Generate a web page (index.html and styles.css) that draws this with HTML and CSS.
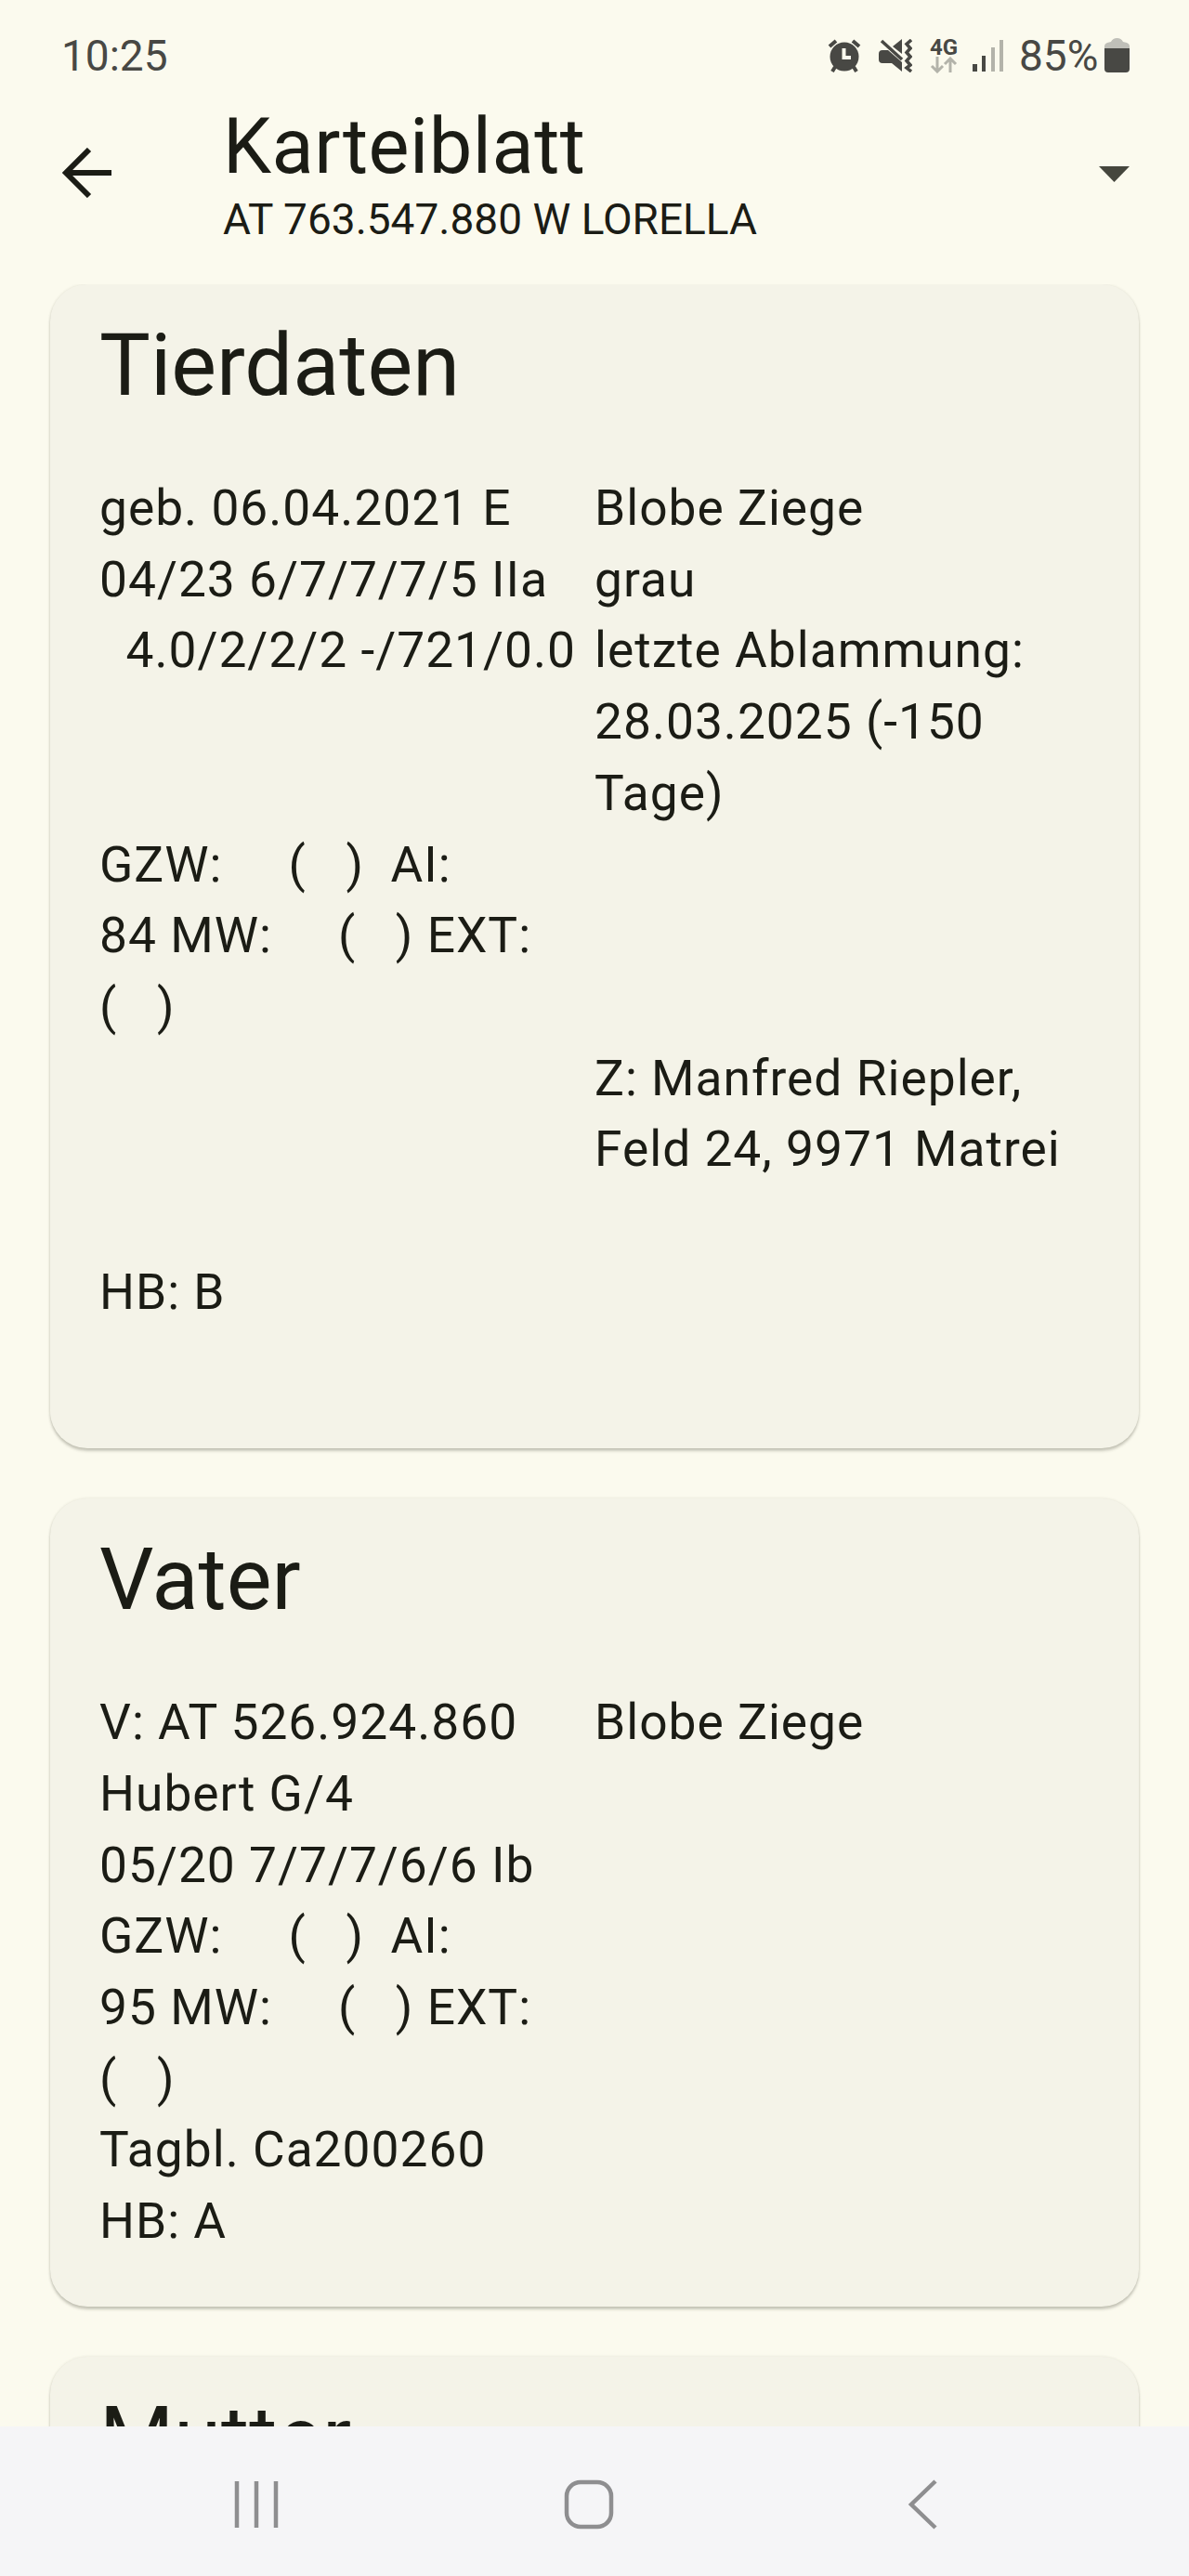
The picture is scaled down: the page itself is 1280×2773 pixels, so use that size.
FILE: index.html
```html
<!DOCTYPE html>
<html lang="de">
<head>
  <meta charset="UTF-8">
  <meta name="viewport" content="width=device-width, initial-scale=1.0">
  <title>Karteiblatt</title>
  <link rel="stylesheet" href="styles.css">
</head>
<body>
  <div class="screen">
    <div class="status-bar">
      <span class="time">10:25</span>
      <div class="status-icons">
        <svg class="icon-alarm" width="36" height="36" viewBox="0 0 36 36">
          <circle cx="18" cy="19" r="15.5" fill="#484844"/>
          <path d="M2 8L9 2M34 8L27 2M8 30L5 35M28 30L31 35" stroke="#484844" stroke-width="4" fill="none"/>
          <path d="M17.500 10V20H25" stroke="#fbfaee" stroke-width="4" fill="none"/>
        </svg>
        <svg class="icon-mute" width="36" height="36" viewBox="0 0 36 36">
          <path d="M0 16Q0 12 4 12H10L25 25V35L14 26H4Q0 26 0 22Z" fill="#484844"/>
          <path d="M15 8L25 0V16Z" fill="#484844"/>
          <path d="M3 2L25 22" stroke="#484844" stroke-width="3.500"/>
          <path d="M35 1L30 5.500L34 10L30 14.500L34 19L30 23.500L34 28L30 31L35 35" stroke="#484844" stroke-width="3.500" fill="none"/>
        </svg>
        <div class="network">
          <span>4G</span>
          <svg width="30" height="18" viewBox="0 0 30 18">
            <path d="M8 0V16M2 10L8 16L14 10M22 17V2M16 8L22 2L28 8" stroke="#b3b3aa" stroke-width="3" fill="none"/>
          </svg>
        </div>
        <svg class="icon-signal" width="34" height="36" viewBox="0 0 34 36">
          <path d="M0 27h5v8h-5zM10 18h4v17h-4z" fill="#484844"/>
          <path d="M20 9h4v26h-4zM29 1h4v34h-4z" fill="#b3b3aa"/>
        </svg>
        <span class="percent">85%</span>
        <svg class="icon-battery" width="27" height="38" viewBox="0 0 27 38">
          <path d="M0 12V9Q0 6 3 5L7 4Q9 0 13.500 0T20 4L24 5Q27 6 27 9V12Z" fill="#bfbfb8"/>
          <path d="M0 11H27V33Q27 37 23 37H4Q0 37 0 33Z" fill="#484844"/>
        </svg>
      </div>
    </div>

    <header class="app-bar">
      <svg class="icon-back" width="54" height="54" viewBox="0 0 54 54">
        <path d="M53 27H5M29 2L4 27L29 52" stroke="#1b1c15" stroke-width="6" fill="none"/>
      </svg>
      <div class="heading">
        <h1>Karteiblatt</h1>
        <p>AT 763.547.880 W LORELLA</p>
      </div>
      <svg class="icon-dropdown" width="33" height="17" viewBox="0 0 33 17">
        <path d="M0 0H33L16.500 17Z" fill="#45463d"/>
      </svg>
    </header>

    <main class="cards">
      <section class="card">
        <h2>Tierdaten</h2>
        <div class="data">
          <p>geb. 06.04.2021 E</p>
          <p>Blobe Ziege</p>
          <p>04/23 6/7/7/7/5 IIa</p>
          <p>grau</p>
          <p>  4.0/2/2/2 -/721/0.0</p>
          <p>letzte Ablammung: 28.03.2025 (-150 Tage)</p>
          <p>GZW:     (   )  AI:
84 MW:     (   ) EXT:
(   )</p>
          <p></p>
          <p></p>
          <p>Z: Manfred Riepler, Feld 24, 9971 Matrei</p>
          <p></p>
          <p></p>
          <p>HB: B</p>
          <p></p>
          <p></p>
          <p></p>
        </div>
      </section>

      <section class="card">
        <h2>Vater</h2>
        <div class="data">
          <p>V: AT 526.924.860 Hubert G/4</p>
          <p>Blobe Ziege</p>
          <p>05/20 7/7/7/6/6 Ib</p>
          <p></p>
          <p>GZW:     (   )  AI:
95 MW:     (   ) EXT:
(   )</p>
          <p></p>
          <p>Tagbl. Ca200260</p>
          <p></p>
          <p>HB: A</p>
          <p></p>
        </div>
      </section>

      <section class="card">
        <h2>Mutter</h2>
      </section>
    </main>

    <nav class="nav-bar">
      <svg width="54" height="54" viewBox="0 0 54 54">
        <path d="M6 2V52M27 2V52M48 2V52" stroke="#8e8e90" stroke-width="4.500"/>
      </svg>
      <svg width="54" height="54" viewBox="0 0 54 54">
        <rect x="3" y="3" width="48" height="48" rx="15" stroke="#8e8e90" stroke-width="4.500" fill="none"/>
      </svg>
      <svg width="54" height="54" viewBox="0 0 54 54">
        <path d="M42 2L16 27L42 52" stroke="#8e8e90" stroke-width="4.500" fill="none"/>
      </svg>
    </nav>
  </div>
</body>
</html>
```
FILE: styles.css
```css
* {
  box-sizing: border-box;
}
body {
  margin: 0;
  font-family: Roboto, sans-serif;
  background-color: #fbfaee;
  color: #1b1c15;
}
h1, h2, p {
  margin: 0;
  font-weight: 400;
}
svg {
  display: block;
  flex-shrink: 0;
}
.screen {
  height: 2773px;
  display: flex;
  flex-direction: column;
  overflow: hidden;
}

/* status bar */
.status-bar {
  height: 120px;
  padding: 0 64px 0 66px;
  display: flex;
  align-items: center;
  justify-content: space-between;
  color: #484844;
  font-size: 46px;
  line-height: 54px;
}
.status-icons {
  display: flex;
  align-items: center;
}
.icon-mute {
  margin-left: 19px;
}
.network {
  margin-left: 19px;
  width: 30px;
}
.network span {
  display: block;
  font-size: 24px;
  font-weight: 700;
  line-height: 20px;
}
.icon-signal {
  margin-left: 16px;
}
.percent {
  width: 87px;
  margin-left: 16px;
}
.icon-battery {
  margin-left: 5px;
}

/* app bar */
.app-bar {
  height: 186px;
  padding: 0 64px 0 67px;
  display: flex;
  align-items: flex-start;
}
.icon-back {
  margin-top: 39px;
}
.heading {
  flex: 1;
  margin-left: 119px;
}
.heading h1 {
  font-size: 83px;
  line-height: 84px;
  letter-spacing: 0.500px;
  margin-top: -4px;
}
.heading p {
  font-size: 46px;
  line-height: 54px;
  margin-top: 9px;
}
.icon-dropdown {
  margin-top: 59px;
}

/* cards */
.cards {
  flex: 1;
  min-height: 0;
  overflow: hidden;
  padding: 0 54px;
}
.card {
  margin-bottom: 54px;
  padding: 28px 0 53px 53px;
  background-color: #f4f3e8;
  border-radius: 40px;
  box-shadow: 0 3px 3px rgba(60, 60, 45, 0.25), 0 0 3px rgba(60, 60, 45, 0.12);
}
.card h2 {
  font-size: 92px;
  line-height: 120px;
  margin-bottom: 55px;
}
.data {
  display: grid;
  grid-template-columns: 533px 533px;
}
.data p {
  min-height: 76.700px;
  font-size: 53.300px;
  line-height: 76.700px;
  letter-spacing: 1px;
  white-space: pre-wrap;
}

/* bottom navigation */
.nav-bar {
  height: 161px;
  padding: 7px 261px 0 249px;
  display: flex;
  align-items: center;
  justify-content: space-between;
  background-color: #f5f5f7;
}
```
